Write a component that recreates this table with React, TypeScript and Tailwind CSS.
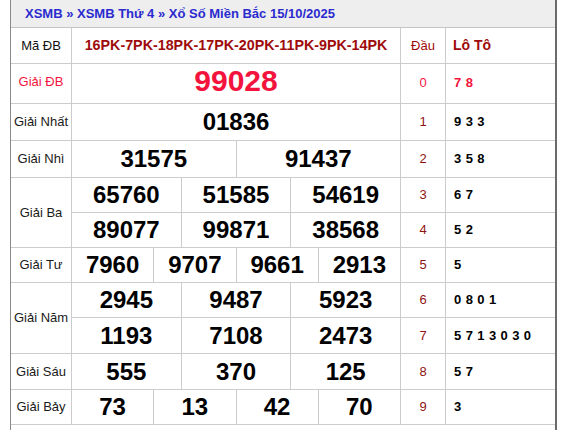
import React from 'react';

type Prize = {
  label: string;
  lines: string[][];
  special?: boolean;
};

const prizes: Prize[] = [
  { label: 'Giải ĐB', lines: [['99028']], special: true },
  { label: 'Giải Nhất', lines: [['01836']] },
  { label: 'Giải Nhì', lines: [['31575', '91437']] },
  { label: 'Giải Ba', lines: [['65760', '51585', '54619'], ['89077', '99871', '38568']] },
  { label: 'Giải Tư', lines: [['7960', '9707', '9661', '2913']] },
  { label: 'Giải Năm', lines: [['2945', '9487', '5923'], ['1193', '7108', '2473']] },
  { label: 'Giải Sáu', lines: [['555', '370', '125']] },
  { label: 'Giải Bảy', lines: [['73', '13', '42', '70']] },
];

const loto: string[] = ['7 8', '9 3 3', '3 5 8', '6 7', '5 2', '5', '0 8 0 1', '5 7 1 3 0 3 0', '5 7', '3'];

const colsFor = (n: number) => {
  switch (n) {
    case 2: return 'grid-cols-2';
    case 3: return 'grid-cols-3';
    case 4: return 'grid-cols-4';
    default: return 'grid-cols-1';
  }
};

const App: React.FC = () => {
  let dau = 0;

  return (
    <div className="w-[564px] h-[430px] bg-white font-['Liberation_Sans',Arial,sans-serif]">
      <div className="ml-[10px] w-[547px] h-[430px] border-l border-l-[#8a8a8a] border-r-2 border-r-[#6a6a6a]">
        {/* Title */}
        <div className="h-[28px] bg-[#eeeeee] border-b border-[#c4c4c4] flex items-center pl-[14px]">
          <span className="text-[13px] font-bold text-[#2b2bcf]">
            XSMB » XSMB Thứ 4 » Xổ Số Miền Bắc 15/10/2025
          </span>
        </div>

        {/* Result table */}
        <div className="grid grid-cols-[60px_328px_44px_109px] grid-rows-[35px_39px_36px_36px_34px_34px_34px_34px_35px_35px_34px] gap-px bg-[#cccccc] pb-px">
          <div className="bg-white flex items-center justify-center text-[13px] text-[#111]">Mã ĐB</div>
          <div className="bg-white flex items-center justify-center text-[14.3px] font-bold text-[#9e0b0b]">
            16PK-7PK-18PK-17PK-20PK-11PK-9PK-14PK
          </div>
          <div className="bg-white flex items-center justify-center text-[13px] text-[#9e0b0b]">Đầu</div>
          <div className="bg-white flex items-center pl-[7px] text-[14px] font-bold text-[#9e0b0b]">Lô Tô</div>

          {prizes.map((p) => (
            <React.Fragment key={p.label}>
              <div
                className={`bg-white flex items-center justify-center text-[13px] ${
                  p.lines.length === 2 ? 'row-span-2' : ''
                } ${p.special ? 'text-[#f2143c] pb-[3px]' : 'text-[#1a1a1a]'}`}
              >
                {p.label}
              </div>
              {p.lines.map((line, li) => {
                const d = dau++;
                return (
                  <React.Fragment key={li}>
                    <div className={`grid ${colsFor(line.length)} gap-px bg-[#cccccc]`}>
                      {line.map((n, ni) => (
                        <div
                          key={ni}
                          className={`bg-white flex items-center justify-center font-bold leading-none ${
                            p.special ? 'text-[30px] text-[#f2143c] pb-[6px]' : 'text-[24px] text-black'
                          }`}
                        >
                          {n}
                        </div>
                      ))}
                    </div>
                    <div
                      className={`bg-white flex items-center justify-center text-[13px] ${
                        d === 0 ? 'text-[#f2143c] pb-[2px]' : 'text-[#8f1414]'
                      }`}
                    >
                      {d}
                    </div>
                    <div
                      className={`bg-white flex items-center pl-[8px] text-[13px] font-bold tracking-[0.4px] whitespace-pre ${
                        d === 0 ? 'text-[#f2143c] pb-[2px]' : 'text-black'
                      }`}
                    >
                      {loto[d]}
                    </div>
                  </React.Fragment>
                );
              })}
            </React.Fragment>
          ))}
        </div>
      </div>
    </div>
  );
};

export default App;
